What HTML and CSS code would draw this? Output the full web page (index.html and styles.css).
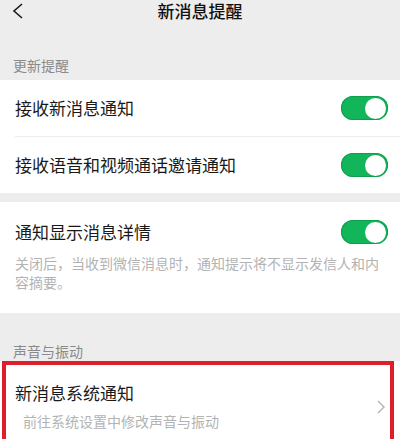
FILE: index.html
```html
<!DOCTYPE html>
<html lang="zh-CN">
<head>
<meta charset="utf-8">
<title>新消息提醒</title>
<link rel="stylesheet" href="styles.css">
</head>
<body>
<div class="nav">
  <svg class="back" width="12" height="16" viewBox="0 0 12 16"><polyline points="10,1 2,8 10,15" fill="none" stroke="#1a1a1a" stroke-width="1.6"/></svg>
  <div class="nav-title">新消息提醒</div>
</div>
<div class="section-label first">更新提醒</div>
<div class="group">
  <div class="row">
    <span class="row-title">接收新消息通知</span>
    <span class="switch"><span class="knob"></span></span>
  </div>
  <div class="divider"></div>
  <div class="row">
    <span class="row-title">接收语音和视频通话邀请通知</span>
    <span class="switch"><span class="knob"></span></span>
  </div>
</div>
<div class="gap"></div>
<div class="group detail">
  <div class="row-top">
    <span class="row-title">通知显示消息详情</span>
    <span class="switch"><span class="knob"></span></span>
  </div>
  <p class="desc">关闭后，当收到微信消息时，通知提示将不显示发信人和内容摘要。</p>
</div>
<div class="section-label second">声音与振动</div>
<div class="group sys">
  <div class="sys-text">
    <div class="row-title">新消息系统通知</div>
    <div class="desc sys-desc">前往系统设置中修改声音与振动</div>
  </div>
  <svg class="chev" width="10" height="14" viewBox="0 0 10 14"><polyline points="2,1 8,7 2,13" fill="none" stroke="#b2b2b2" stroke-width="1.4"/></svg>
  <div class="highlight"></div>
</div>
</body>
</html>
```
FILE: styles.css
```css
html, body {
  margin: 0;
  padding: 0;
}
body {
  background: #ededed;
  font-family: "Noto Sans CJK SC", "Noto Sans", sans-serif;
  color: #191919;
  width: 400px;
  height: 439px;
  overflow: hidden;
}
.nav {
  height: 22px;
  display: flex;
  align-items: center;
  justify-content: center;
  position: relative;
}
.back {
  position: absolute;
  left: 12px;
  top: 3px;
}
.nav-title {
  font-size: 17px;
  line-height: 22px;
  font-weight: 500;
  color: #111;
}
.section-label {
  font-size: 14px;
  line-height: 20px;
  color: #8a8a8a;
  padding-left: 13px;
}
.section-label.first {
  padding-top: 33px;
  padding-bottom: 5px;
}
.section-label.second {
  padding-top: 28px;
  height: 20px;
}
.group {
  background: #fff;
}
.row {
  height: 56px;
  display: flex;
  align-items: center;
  justify-content: space-between;
  padding: 0 12px 0 15px;
}
.row-title {
  font-size: 17px;
  line-height: 24px;
}
.divider {
  height: 1px;
  background: #ececec;
  margin-left: 15px;
}
.switch {
  width: 47px;
  height: 24px;
  border-radius: 12px;
  background: #13b55a;
  box-shadow: inset 0 0 0 1px #0f9e4e;
  position: relative;
  flex: none;
}
.knob {
  position: absolute;
  right: 2px;
  top: 1.5px;
  width: 21px;
  height: 21px;
  border-radius: 50%;
  background: #fff;
}
.gap {
  height: 9px;
}
.detail {
  padding: 18px 12px 21px 15px;
}
.row-top {
  display: flex;
  align-items: center;
  justify-content: space-between;
  height: 24px;
}
.desc {
  margin: 10px 0 0;
  font-size: 14px;
  line-height: 19px;
  color: #b3b3b3;
  padding-right: 0;
}
.sys {
  position: relative;
  height: 90px;
  display: flex;
  align-items: flex-start;
  justify-content: space-between;
  padding: 0 14px 0 15px;
}
.sys-text {
  padding-top: 20px;
}
.sys-desc {
  margin-top: 7px;
  padding-left: 8px;
}
.chev {
  margin-top: 39px;
}
.highlight {
  position: absolute;
  left: 2px;
  top: 0;
  width: 384px;
  height: 100px;
  border: 4px solid #dc1f28;
}
```
